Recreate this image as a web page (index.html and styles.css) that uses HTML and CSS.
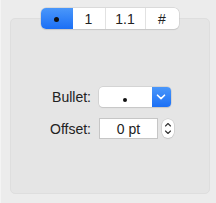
FILE: index.html
```html
<!DOCTYPE html>
<html>
<head>
<meta charset="utf-8">
<link rel="stylesheet" href="styles.css">
</head>
<body>
<div class="window">
  <div class="segmented">
    <div class="seg seg-active"><span class="dot"></span></div>
    <div class="seg seg-1">1</div>
    <div class="seg seg-2">1.1</div>
    <div class="seg seg-3">#</div>
  </div>
  <div class="panel">
    <div class="form">
      <div class="label">Bullet:</div>
      <div class="popup">
        <div class="popup-value"><span class="dot small"></span></div>
        <div class="popup-arrow">
          <svg width="10" height="6" viewBox="0 0 10 6"><path d="M1.5 1.2 L5 4.6 L8.5 1.2" fill="none" stroke="#fff" stroke-width="1.6" stroke-linecap="round" stroke-linejoin="round"/></svg>
        </div>
      </div>
      <div class="label">Offset:</div>
      <div class="field-row">
        <div class="field">0 pt</div>
        <div class="stepper">
          <svg width="12" height="19" viewBox="0 0 12 19"><path d="M3.5 7 L6 4.5 L8.5 7" fill="none" stroke="#333" stroke-width="1.1" stroke-linecap="round" stroke-linejoin="round"/><path d="M3.5 12 L6 14.5 L8.5 12" fill="none" stroke="#333" stroke-width="1.1" stroke-linecap="round" stroke-linejoin="round"/></svg>
        </div>
      </div>
    </div>
  </div>
</div>
</body>
</html>
```
FILE: styles.css
```css
html, body {
  margin: 0;
  padding: 0;
  background: #ececec;
  font-family: "Liberation Sans", Arial, sans-serif;
  font-size: 14px;
  color: #222;
}
.window {
  width: 216px;
  height: 203px;
  display: flex;
  flex-direction: column;
  align-items: center;
  padding-top: 8px;
  box-sizing: border-box;
  border-left: 1px solid #f4f4f4;
}
.segmented {
  display: flex;
  height: 21px;
  box-sizing: border-box;
  background: #fff;
  border-radius: 5px;
  box-shadow: 0 0 0 0.5px #c8c8c8, 0 1px 1px rgba(0,0,0,0.12);
  position: relative;
  z-index: 2;
  margin-left: 2px;
}
.seg {
  display: flex;
  align-items: center;
  justify-content: center;
  height: 21px;
  font-size: 14px;
  color: #222;
  border-left: 1px solid #e2e2e2;
  box-sizing: border-box;
}
.seg-active {
  width: 32px;
  border-left: none;
  background: linear-gradient(#4a97fa, #1b6ff5);
  border-radius: 5px 0 0 5px;
}
.seg-1 { width: 32px; border-left: none; }
.seg-2 { width: 40px; }
.seg-3 { width: 34px; }
.dot {
  width: 5px;
  height: 5px;
  background: #111;
  border-radius: 50%;
  display: block;
  margin-top: 2px;
}
.dot.small { width: 4px; height: 4px; margin-top: 6px; }
.panel {
  width: 200px;
  height: 176px;
  margin-top: -11px;
  margin-left: 2px;
  box-sizing: border-box;
  background: #e5e5e5;
  border: 1px solid #dedede;
  border-radius: 5px;
  display: flex;
  justify-content: center;
  padding-top: 68px;
}
.form {
  display: grid;
  grid-template-columns: auto auto;
  column-gap: 8px;
  row-gap: 11px;
  align-items: center;
  align-content: start;
  margin-left: 5px;
}
.label {
  text-align: right;
  font-size: 14px;
  color: #222;
}
.popup {
  display: flex;
  width: 72px;
  height: 20px;
  border-radius: 4px;
  box-shadow: 0 0 0 0.5px #c4c4c4, 0 1px 1px rgba(0,0,0,0.12);
  background: #fff;
}
.popup-value {
  flex: 1;
  display: flex;
  align-items: center;
  justify-content: center;
}
.popup-arrow {
  width: 19px;
  display: flex;
  align-items: center;
  justify-content: center;
  background: linear-gradient(#4a97fa, #1b6ff5);
  border-radius: 0 4px 4px 0;
}
.field-row {
  display: flex;
  align-items: center;
  gap: 4px;
}
.field {
  width: 59px;
  height: 21px;
  box-sizing: border-box;
  background: #fff;
  border: 1px solid #c6c6c6;
  display: flex;
  align-items: center;
  justify-content: center;
  font-size: 14px;
  color: #222;
}
.stepper {
  width: 12px;
  height: 19px;
  background: #fff;
  border-radius: 6px;
  box-shadow: 0 0 0 0.5px #c4c4c4, 0 1px 1px rgba(0,0,0,0.12);
  display: flex;
}
```
